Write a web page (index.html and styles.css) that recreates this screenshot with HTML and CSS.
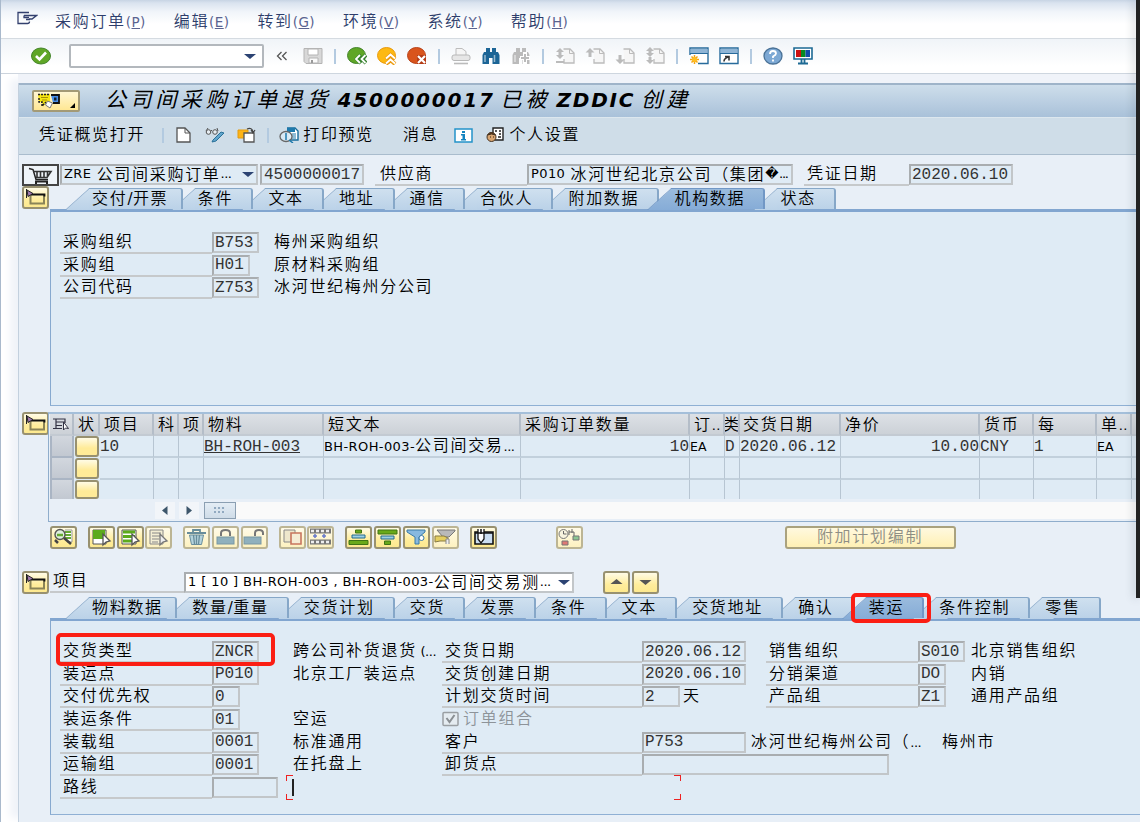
FILE: index.html
```html
<!DOCTYPE html>
<html lang="zh-CN">
<head>
    <meta charset="UTF-8">
    <title>公司间采购订单退货</title>
    <link rel="stylesheet" href="styles.css">
</head>
<body>
    <!-- shared icons -->
    <svg class="defs">
        <symbol id="folder" viewBox="0 0 27 22">
            <path d="M8.500 7v10.500H22V9" fill="none" stroke="#8a8458" stroke-width="2"/>
            <path d="M9 8.500h13.500v2" fill="none" stroke="#111" stroke-width="1.800"/>
            <path d="M4.500 3v9" stroke="#222"/>
            <path d="M5 4l6 3.500-5 3z" fill="#a07ab0" stroke="#222"/>
        </symbol>
        <symbol id="page" viewBox="0 0 20 18">
            <path d="M8.500 2h6.500l4 4v10H9v-4" fill="#f6f6f6" stroke="#bcbcbc" stroke-width="1.3"/>
            <path d="M14.500 2v4.500H19" fill="none" stroke="#bcbcbc"/>
        </symbol>
        <symbol id="binoculars" viewBox="0 0 20 18">
            <path d="M3 5h2V1h4v4h2V1h4v4h2l1.500 3v9h-7v-6H8v6H1.500V8z" fill="currentColor"/>
            <path d="M4 8v7M13.500 8v7" stroke="#fff" stroke-opacity=".55" stroke-width="1.500"/>
        </symbol>
        <symbol id="lock" viewBox="0 0 27 22">
            <rect x="5" y="11" width="17" height="7" fill="#8fb0bd" stroke="#7897a3"/>
        </symbol>
    </svg>

    <div class="menu-bar">
        <svg class="menu-icon" width="21" height="15" viewBox="0 0 21 15" fill="none" stroke="#33406e" stroke-width="1.300"><path d="M12 1.500H1v11h9.500q2 0 2-2M7 4.500h12.500L15 8h-3M7 4.500v2h5M9 8.500h4"/></svg>
        <span>采购订单<i>(<u>P</u>)</i></span>
        <span>编辑<i>(<u>E</u>)</i></span>
        <span>转到<i>(<u>G</u>)</i></span>
        <span>环境<i>(<u>V</u>)</i></span>
        <span>系统<i>(<u>Y</u>)</i></span>
        <span>帮助<i>(<u>H</u>)</i></span>
    </div>

    <div class="toolbar">
        <svg class="ico" viewBox="0 0 20 18"><ellipse cx="10" cy="9" rx="9.500" ry="8" fill="#5fa626" stroke="#44852c"/><path d="M5 9l3.500 3.500L15 5.500" fill="none" stroke="#fff" stroke-width="2.600"/></svg>
        <div class="command"><b class="arrow"></b></div>
        <svg class="chev" viewBox="0 0 12 10" fill="none" stroke="#555" stroke-width="1.300"><path d="M5.500 1L1.500 5l4 4M10.500 1l-4 4 4 4"/></svg>
        <svg class="ico" viewBox="0 0 20 18"><path d="M1 1.500h18v15H3l-2-2z" fill="#d8d8d8" stroke="#b4b4b4"/><path d="M5 2h10v6H5z" fill="#fff" stroke="#b4b4b4"/><path d="M6 11h9v5H6z" fill="#fafafa" stroke="#b4b4b4"/><path d="M8 13h2v3H8z" fill="#999"/></svg>
        <b class="sep"></b>
        <svg class="ico" viewBox="0 0 20 18"><ellipse cx="9.500" cy="8.500" rx="9" ry="8" fill="#5fa626" stroke="#44852c"/><path d="M14 8l-4 4 4 4M19 8l-4 4 4 4" fill="none" stroke="#35802c" stroke-width="4"/><path d="M13 8l-4 4 4 4M18.500 8l-4 4 4 4" fill="none" stroke="#fff" stroke-width="1.800"/></svg>
        <svg class="ico" viewBox="0 0 20 18"><ellipse cx="9.500" cy="8.500" rx="9" ry="8" fill="#fdb913" stroke="#e99a0c"/><path d="M9 12l4.500-4 4.500 4M9 17l4.500-4 4.500 4" fill="none" stroke="#ec9b10" stroke-width="4"/><path d="M9 11.500l4.500-4 4.500 4M9 16.500l4.500-4 4.500 4" fill="none" stroke="#fff" stroke-width="1.800"/></svg>
        <svg class="ico" viewBox="0 0 20 18"><ellipse cx="9.500" cy="8.500" rx="9" ry="8" fill="#d9541c" stroke="#b9431a"/><path d="M10 8h9v9h-9z" fill="#b43b15"/><path d="M11 9l7 7M18 9l-7 7" stroke="#fff" stroke-width="2.200"/></svg>
        <b class="sep"></b>
        <svg class="ico" viewBox="0 0 20 18"><path d="M5 8V1.500h6l4 3V8" fill="#f5f5f5" stroke="#bdbdbd"/><rect x="1" y="8" width="18" height="5.500" rx="2" fill="#e6e6e6" stroke="#b8b8b8"/><path d="M3 16.500h14" stroke="#bbb" stroke-width="1.600"/></svg>
        <svg class="ico blue"><use href="#binoculars"/></svg>
        <svg class="ico gray" viewBox="0 0 20 18"><use href="#binoculars" width="20" height="18"/><path d="M14 5v12M9 11h10" stroke="#fff" stroke-width="4"/><path d="M14 7v8M10 11h8" stroke="#bbb" stroke-width="2"/></svg>
        <b class="sep"></b>
        <svg class="ico" viewBox="0 0 20 18"><use href="#page" width="20" height="18"/><path d="M5 1l4 4H6.500v3H9l-4 4-4-4h2.500V5H1zM1 14h8v2H1z" fill="#bbb"/></svg>
        <svg class="ico" viewBox="0 0 20 18"><use href="#page" width="20" height="18"/><path d="M5 1l4.500 4.500h-3V10h-3V5.500H.5z" fill="#bbb"/></svg>
        <svg class="ico" viewBox="0 0 20 18"><use href="#page" width="20" height="18"/><path d="M5 17l4.500-4.500h-3V8h-3v4.500H.5z" fill="#bbb"/></svg>
        <svg class="ico" viewBox="0 0 20 18"><use href="#page" width="20" height="18"/><path d="M5 0l4 4H6.500v2H9l-4 4-4-4h2.500V4H1zM5 17l4-4H6.500v-3h-3v3H1z" fill="#bbb"/></svg>
        <b class="sep"></b>
        <svg class="ico" viewBox="0 0 20 18"><path d="M1 8V1h18v15.500H9" fill="#fff" stroke="#276b9c" stroke-width="1.400"/><path d="M1.500 2h17v4h-17z" fill="#8fb5d6"/><path d="M1 6.500h18" stroke="#276b9c"/><path d="M5.500 8v9M1 12.500h9M2.500 9.500l6 6M8.500 9.500l-6 6" stroke="#f5a511" stroke-width="1.500"/><circle cx="5.500" cy="12.500" r="2.500" fill="#ffbe22"/></svg>
        <svg class="ico" viewBox="0 0 20 18"><path d="M1 1h18v15.500H1z" fill="#fff" stroke="#276b9c" stroke-width="1.400"/><path d="M1.500 2h17v4h-17z" fill="#8fb5d6"/><path d="M1 6.500h18" stroke="#276b9c"/><path d="M5 14.500q0-3 4-4.500M6 9.500h4v4" fill="none" stroke="#333" stroke-width="1.600"/></svg>
        <b class="sep"></b>
        <svg class="ico" viewBox="0 0 20 18"><ellipse cx="10" cy="9" rx="9" ry="8" fill="#7ca8d4" stroke="#4a7297" stroke-width="1.300"/><path d="M7 7q0-3 3-3t3 2.500q0 1.500-3 3V11M10 12.500v2" fill="none" stroke="#fff" stroke-width="1.800"/></svg>
        <svg class="ico" viewBox="0 0 20 18"><path d="M1 1h18v11H1z" fill="#fff" stroke="#1d6a94" stroke-width="1.600"/><path d="M3 3h5v7H3z" fill="#c11"/><path d="M8 3h4.500v7H8z" fill="#088a22"/><path d="M12.500 3H17v7h-4.500z" fill="#124ba8"/><path d="M8.500 12v4M11.500 12v4M5 16.500h10" stroke="#1d6a94" stroke-width="1.800"/></svg>
    </div>

    <div class="window">
        <div class="title-bar">
            <div class="gos-button">
                <svg width="24" height="18" viewBox="0 0 24 18"><path d="M1 2h12v8H9l-3 5-1-5H2z" fill="#f6e612"/><path d="M1 2.500h12M2 6v4h3v4l4-4" fill="none" stroke="#222" stroke-width="1.500" stroke-dasharray="2 1"/><path d="M4 5.500h7M5 8h5" stroke="#a58f08"/><path d="M14 3h8v8h-6" fill="#4a8fe8" stroke="#111" stroke-width="1.800"/><path d="M17 5.500h2.500v3H17z" fill="#123"/><path d="M10.500 9l5 2-2.500 5-4.500-3z" fill="#fff" stroke="#777"/></svg>
                <svg class="corner" width="5" height="5" viewBox="0 0 5 5"><path d="M5 0v5H0z"/></svg>
            </div>
            <h1>公司间采购订单退货 <em>4500000017</em> 已被 <em>ZDDIC</em> 创建</h1>
        </div>

        <div class="app-toolbar">
            <span>凭证概览打开</span>
            <b class="sep"></b>
            <svg class="i-new" width="15" height="16" viewBox="0 0 15 16"><path d="M1 1h8l5 5v9H1z" fill="#fff" stroke="#555" stroke-width="1.300"/><path d="M9 1v5h5" fill="none" stroke="#555"/></svg>
            <svg class="i-edit" width="20" height="16" viewBox="0 0 20 16"><path d="M1 4l2-3M6 4l1-1M13 4l-1-3" stroke="#555"/><circle cx="3.500" cy="5" r="2.300" fill="#e7edf2" stroke="#555"/><circle cx="10" cy="5" r="2.300" fill="#e7edf2" stroke="#555"/><path d="M8 13l8-8 3 1-8 8-4 1z" fill="#62a6cd" stroke="#2a7199"/></svg>
            <svg class="i-copy" width="19" height="16" viewBox="0 0 19 16"><path d="M1 3h10v8H1z" fill="#fdb417" stroke="#e39a10"/><path d="M7 6h10v9H7z" fill="#fff" stroke="#555" stroke-width="1.300"/><path d="M10 2q5-2 6 3M14 3l2 3 2-3" fill="none" stroke="#444" stroke-width="1.200"/></svg>
            <b class="sep sep2"></b>
            <svg class="i-preview" width="20" height="16" viewBox="0 0 20 16"><path d="M8 1h8l3 3v9h-8" fill="#fff" stroke="#166c9c" stroke-width="1.400"/><path d="M8 1h8v4H8z" fill="#1e7aad"/><path d="M13 7h4M13 9h4M13 11h4" stroke="#1e7aad"/><ellipse cx="7" cy="9.500" rx="6" ry="5" fill="#d9ecf6" fill-opacity=".8" stroke="#666" stroke-width="1.300"/><path d="M7 6v7M10 13l4 3" stroke="#1e7aad" stroke-width="1.500"/></svg>
            <span>打印预览</span>
            <span class="msg">消息</span>
            <svg class="i-info" width="19" height="15" viewBox="0 0 19 15"><path d="M1 1h17v13H1z" fill="#fff" stroke="#2493c9" stroke-width="1.500"/><path d="M8 3h3v2H8zM7 6h4v5h1v1.500H7V11h1.500V7.500H7z" fill="#1384c0"/></svg>
            <svg class="i-user" width="18" height="16" viewBox="0 0 18 16"><path d="M7 1h10v12H7z" fill="#fff" stroke="#222" stroke-width="1.400"/><path d="M9 4h2M13 4h2M13 7h2M12 10h3" stroke="#222" stroke-width="1.500"/><circle cx="5.500" cy="10" r="4.500" fill="#d9a571" stroke="#432"/><path d="M1.500 8q4-5 8 0l-4-1z" fill="#643d1a" stroke="#432"/><path d="M4 10h1M7 10h1" stroke="#321"/></svg>
            <span>个人设置</span>
        </div>

        <div class="doc-header">
            <div class="cart"><svg width="32" height="18" viewBox="0 0 32 18"><path d="M5 2.500l4 1 3 10h12" fill="none" stroke="#222" stroke-width="1.500"/><path d="M9 5.500h18l-4 6H12M13 5v6M16.500 5v6M20 5v6M23.500 5v6" fill="none" stroke="#333" stroke-width="1.600"/><path d="M12 18v-2.500h11V18" fill="none" stroke="#222" stroke-width="2"/></svg></div>
            <div class="field text doc-type"><i>ZRE</i> 公司间采购订单<i class="dots">...</i><b class="arrow"></b></div>
            <div class="field mono doc-no">4500000017</div>
            <div class="label vendor-label">供应商</div>
            <div class="field text vendor"><i>P010</i> 冰河世纪北京公司（集团<i>�</i><i class="dots">...</i></div>
            <div class="label date-label">凭证日期</div>
            <div class="field mono date">2020.06.10</div>
        </div>

        <!-- header data -->
        <div class="section header-section">
            <div class="btn"><svg><use href="#folder"/></svg></div>
            <div class="section-body">
                <div class="tabs">
                    <div class="tab"><span>交付<i>/</i>开票</span></div>
                    <div class="tab"><span>条件</span></div>
                    <div class="tab"><span>文本</span></div>
                    <div class="tab"><span>地址</span></div>
                    <div class="tab"><span>通信</span></div>
                    <div class="tab"><span>合伙人</span></div>
                    <div class="tab"><span>附加数据</span></div>
                    <div class="tab active"><span>机构数据</span></div>
                    <div class="tab"><span>状态</span></div>
                </div>
                <div class="panel org-panel">
                    <div class="row"><div class="label">采购组织</div><div class="field mono w4">B753</div><p class="near">梅州采购组织</p></div>
                    <div class="row"><div class="label">采购组</div><div class="field mono w3">H01</div><p class="near">原材料采购组</p></div>
                    <div class="row"><div class="label">公司代码</div><div class="field mono w4">Z753</div><p class="near">冰河世纪梅州分公司</p></div>
                </div>
            </div>
        </div>

        <!-- item overview -->
        <div class="section overview-section">
            <div class="btn"><svg><use href="#folder"/></svg></div>
            <div class="items">
                <div class="items-row items-head">
                    <div class="cfg"><svg width="17" height="13" viewBox="0 0 17 13"><path d="M0 1h12v4M3 1v9.500h6M3 4h9M3 7.500h6M0 10.500h3" fill="none" stroke="#334" stroke-width="1.200"/><path d="M10.500 4v8l2-2 3 .5z" fill="#fff" stroke="#334"/></svg></div>
                    <div>状</div><div>项目</div><div>科</div><div>项</div><div>物料</div><div>短文本</div><div>采购订单数量</div><div>订<i>..</i></div><div class="cut"><span>类</span></div><div class="tight">交货日期</div><div>净价</div><div>货币</div><div>每</div><div>单<i>..</i></div><div></div>
                </div>
                <div class="items-row">
                    <div class="sel"></div><div class="st"></div><div class="mono">10</div><div></div><div></div><div class="mono"><u>BH-ROH-003</u></div><div><i>BH-ROH-003-</i>公司间交易<i class="dots">...</i></div><div class="mono right">10</div><div><i class="uom">EA</i></div><div class="mono">D</div><div class="mono">2020.06.12</div><div class="mono right">10.00</div><div class="mono">CNY</div><div class="mono">1</div><div><i class="uom">EA</i></div><div></div>
                </div>
                <div class="items-row">
                    <div class="sel"></div><div class="st"></div><div></div><div></div><div></div><div></div><div></div><div></div><div></div><div></div><div></div><div></div><div></div><div></div><div></div><div></div>
                </div>
                <div class="items-row last">
                    <div class="sel"></div><div class="st"></div><div></div><div></div><div></div><div></div><div></div><div></div><div></div><div></div><div></div><div></div><div></div><div></div><div></div><div></div>
                </div>
                <div class="scrollbar">
                    <div class="sb-btn"><svg width="6" height="9" viewBox="0 0 6 9"><path d="M5.500 0v9L0 4.500z" fill="#3d566b"/></svg></div>
                    <div class="sb-btn"><svg width="6" height="9" viewBox="0 0 6 9"><path d="M.5 0v9L6 4.500z" fill="#3d566b"/></svg></div>
                    <div class="sb-track"><div class="thumb"></div></div>
                </div>
            </div>
        </div>

        <div class="item-buttons">
            <div class="group">
                <div class="btn"><svg viewBox="0 0 27 22"><path d="M15 4h7v12h-5" fill="#fff" stroke="#999"/><path d="M15 6h6M15 9h6M15 12h6" stroke="#6a3" stroke-width="2"/><circle cx="10" cy="8.500" r="5" fill="#dff0dd" stroke="#555" stroke-width="1.400"/><path d="M7 9h6" stroke="#6a3" stroke-width="2.500"/><path d="M5 14l3 3M14 12l7 6" stroke="#444" stroke-width="2.500"/></svg></div>
            </div>
            <div class="group">
                <div class="btn"><svg viewBox="0 0 27 22"><path d="M5 4h13v14H5z" fill="#fff" stroke="#555"/><path d="M5 4h12v9H5z" fill="#5cab1c"/><path d="M15 8v11l3-3 4-1z" fill="#fff" stroke="#555" stroke-width="1.300"/></svg></div>
                <div class="btn"><svg viewBox="0 0 27 22"><path d="M5 4h14v14H5z" fill="#fff" stroke="#555"/><path d="M6 6h12M6 10.500h12M6 15h10" stroke="#5cab1c" stroke-width="3"/><path d="M15 8v11l3-3 4-1z" fill="#fff" stroke="#555" stroke-width="1.300"/></svg></div>
                <div class="btn off"><svg viewBox="0 0 27 22"><path d="M5 4h13v14H5z" fill="#f3eed4" stroke="#888"/><path d="M7 7h9M7 10h9M7 13h7M7 16h6" stroke="#888"/><path d="M15 8v11l3-3 4-1z" fill="#eee" stroke="#777" stroke-width="1.300"/></svg></div>
            </div>
            <div class="group">
                <div class="btn off"><svg viewBox="0 0 27 22"><path d="M4 7h19M10 6V4h7v2" stroke="#688d9b" stroke-width="1.800" fill="none"/><path d="M6.500 9h14l-2 9.500h-10z" fill="#b5d3dc" stroke="#688d9b"/><path d="M10.500 9l1 9M13.500 9v9M16.500 9l-1 9" stroke="#688d9b" stroke-width="1.300"/></svg></div>
                <div class="btn off"><svg viewBox="0 0 27 22"><use href="#lock" width="27" height="22"/><path d="M9 10V7q0-3 4.500-3T18 7v3" fill="none" stroke="#777" stroke-width="2"/></svg></div>
                <div class="btn off"><svg viewBox="0 0 27 22"><use href="#lock" x="-2" width="27" height="22"/><path d="M14 10V7q0-3 4-3t4 3v2" fill="none" stroke="#777" stroke-width="2"/></svg></div>
            </div>
            <div class="group">
                <div class="btn off"><svg viewBox="0 0 27 22"><path d="M5 4h11v12H5z" fill="#eee7cc" stroke="#888"/><path d="M12 7h10v11H12z" fill="#f5ecd5" stroke="#c8755e" stroke-width="1.600"/></svg></div>
                <div class="btn off"><svg viewBox="0 0 27 22"><path d="M3 5h21M3 16h21" stroke="#777" stroke-width="5"/><path d="M4 5h20M4 16h20" stroke="#eee" stroke-width="2.500" stroke-dasharray="3 2"/><path d="M6 10h4M8 8v4M15 10h4M17 8v4" stroke="#667acb" stroke-width="1.500"/></svg></div>
            </div>
            <div class="group">
                <div class="btn"><svg viewBox="0 0 27 22"><path d="M10.500 4h6v3h-6zM4 14.500h19v4H4z" fill="#69a91a" stroke="#3f7415"/><path d="M7 9h13v3H7z" fill="#9dd0e5" stroke="#236b8e"/></svg></div>
                <div class="btn"><svg viewBox="0 0 27 22"><path d="M4 4h19v4H4zM10.500 15h6v3.500h-6z" fill="#69a91a" stroke="#3f7415"/><path d="M7 10h13v3H7z" fill="#9dd0e5" stroke="#236b8e"/></svg></div>
                <div class="btn"><svg viewBox="0 0 27 22"><path d="M4 4h18v2l-6 5v7h-4v-7L4 6z" fill="#88b9df" stroke="#397aa7"/><circle cx="18.500" cy="12" r="2.500" fill="#fff" stroke="#397aa7"/></svg></div>
                <div class="btn off"><svg viewBox="0 0 27 22"><path d="M5 4h18v1l-6 6h-6z" fill="#b9b9b9" stroke="#777"/><path d="M3 10h9l4 2v3H8l-5 1z" fill="#e4ce5f" stroke="#887b45"/><path d="M14 18v-5h3v5" stroke="#888" fill="#eee"/></svg></div>
            </div>
            <div class="group">
                <div class="btn"><svg viewBox="0 0 27 22"><path d="M5 6h18v12H5z" fill="#cbdef2" stroke="#111" stroke-width="1.600"/><path d="M8 3v10l3 4 3-4V3" fill="#fff" stroke="#111" stroke-width="1.300"/><path d="M11 3v5M5 7h18" stroke="#111" stroke-width="1.500"/></svg></div>
            </div>
            <div class="group lone">
                <div class="btn off"><svg viewBox="0 0 27 22"><circle cx="7.500" cy="8" r="4.500" fill="#f8f4df" stroke="#777"/><path d="M7.500 5v3h3M13 4v5M16 3v4M13 6h5v5" fill="none" stroke="#666"/><path d="M17 10h6v4h-6z" fill="#8cc792" stroke="#777"/><path d="M6 15h6v4H6z" fill="#df7974" stroke="#777"/></svg></div>
            </div>
            <div class="btn wide">附加计划编制</div>
        </div>

        <!-- item detail -->
        <div class="item-picker">
            <div class="btn"><svg><use href="#folder"/></svg></div>
            <div class="label">项目</div>
            <div class="field text white"><i>1 [ 10 ] BH-ROH-003 , BH-ROH-003-</i>公司间交易测<i class="dots">...</i><b class="arrow"></b></div>
            <div class="btn step"><svg viewBox="0 0 27 22"><path d="M13.500 8l6 5h-12z" fill="#555"/></svg></div>
            <div class="btn"><svg viewBox="0 0 27 22"><path d="M13.500 14l6-5h-12z" fill="#555"/></svg></div>
        </div>
        <div class="detail-section">
            <div class="tabs">
                <div class="tab"><span>物料数据</span></div>
                <div class="tab"><span>数量<i>/</i>重量</span></div>
                <div class="tab"><span>交货计划</span></div>
                <div class="tab"><span>交货</span></div>
                <div class="tab"><span>发票</span></div>
                <div class="tab"><span>条件</span></div>
                <div class="tab"><span>文本</span></div>
                <div class="tab"><span>交货地址</span></div>
                <div class="tab"><span>确认</span></div>
                <div class="tab active"><span>装运</span><b class="mark mark-tab"></b></div>
                <div class="tab"><span>条件控制</span></div>
                <div class="tab"><span>零售</span></div>
            </div>
            <div class="panel ship-panel">
                <div class="col">
                    <div class="row"><div class="label">交货类型</div><div class="field mono w4">ZNCR</div><p>跨公司补货退货<i class="dots"> (...</i></p><b class="mark mark-type"></b></div>
                    <div class="row"><div class="label">装运点</div><div class="field mono w4">P010</div><p>北京工厂装运点</p></div>
                    <div class="row"><div class="label">交付优先权</div><div class="field mono w2">0</div></div>
                    <div class="row"><div class="label">装运条件</div><div class="field mono w2">01</div><p>空运</p></div>
                    <div class="row"><div class="label">装载组</div><div class="field mono w4">0001</div><p>标准通用</p></div>
                    <div class="row"><div class="label">运输组</div><div class="field mono w4">0001</div><p>在托盘上</p></div>
                    <div class="row"><div class="label">路线</div><div class="field mono w6"></div><div class="focus"><b></b></div></div>
                </div>
                <div class="col col-mid">
                    <div class="row"><div class="label">交货日期</div><div class="field mono w10">2020.06.12</div></div>
                    <div class="row"><div class="label">交货创建日期</div><div class="field mono w10">2020.06.10</div></div>
                    <div class="row"><div class="label">计划交货时间</div><div class="field mono w3">2</div><p class="unit">天</p></div>
                    <div class="row check"><svg width="17" height="16" viewBox="0 0 17 16"><rect x="1" y="1.500" width="15" height="13" rx="1" fill="#e5ecf1" stroke="#9a9fa3" stroke-width="1.500"/><path d="M4.500 7l3 4 5-7" fill="none" stroke="#8a8f93" stroke-width="2"/></svg><p>订单组合</p></div>
                    <div class="row"><div class="label">客户</div><div class="field mono w10">P753</div><p class="cust">冰河世纪梅州公司（<i class="dots">...</i></p><p class="city">梅州市</p></div>
                    <div class="row"><div class="label">卸货点</div><div class="field mono w24"></div></div>
                </div>
                <div class="col col-right">
                    <div class="row"><div class="label">销售组织</div><div class="field mono w4">S010</div><p>北京销售组织</p></div>
                    <div class="row"><div class="label">分销渠道</div><div class="field mono w2">DO</div><p>内销</p></div>
                    <div class="row"><div class="label">产品组</div><div class="field mono w2">Z1</div><p>通用产品组</p></div>
                </div>
            </div>
        </div>
    </div>
    <div class="screen-edge"></div>
</body>
</html>
```
FILE: styles.css
```css
* {
    box-sizing: border-box;
}

body {
    margin: 0;
    width: 1140px;
    height: 822px;
    overflow: hidden;
    position: relative;
    background-color: #fff;
    border-left: 1px solid #a9b9cc;
    font-family: "Noto Sans CJK SC", sans-serif;
    font-weight: 350;
    font-size: 16px;
    letter-spacing: 1.7px;
    line-height: 20px;
    color: #000;
    white-space: nowrap;
}

i {
    font-family: "DejaVu Sans", sans-serif;
    font-style: normal;
    font-weight: normal;
    font-size: 13px;
    letter-spacing: 0.4px;
}

p {
    margin: 0;
    flex: none;
    line-height: 17px;
}

svg {
    display: block;
    flex: none;
}

.defs {
    width: 0;
    height: 0;
    position: absolute;
}

.mono {
    font-family: "Liberation Mono", monospace;
    font-weight: normal;
    letter-spacing: 0;
    color: #333;
}

.dots {
    letter-spacing: -0.5px;
}

/* menu and standard toolbar */
.menu-bar {
    display: flex;
    align-items: center;
    gap: 28px;
    height: 39px;
    padding: 4px 0 0 16px;
    background: linear-gradient(#c7d4e4 0, #dae3ef 3px, #f1f5fa 12px, #fff 24px);
    border-bottom: 1px solid #d5dbe1;
    color: #2d3d6b;
}

.menu-bar i {
    font-size: 13.5px;
    color: #5a6390;
}

.menu-icon {
    margin: 0 -11px 6px 0;
}

.toolbar {
    display: flex;
    align-items: center;
    gap: 10px;
    height: 35px;
    padding-left: 30px;
    background: linear-gradient(#f0f4f8, #fff 80%);
    border-bottom: 1px solid #cbd3dc;
}

.ico {
    width: 20px;
    height: 18px;
}

.blue {
    color: #1c6596;
}

.gray {
    color: #bbb;
}

.command {
    width: 195px;
    height: 24px;
    margin: 0 2px 0 8px;
    border: 2px solid #b3b8bd;
    border-radius: 2px;
    background-color: #fff;
    display: flex;
    align-items: center;
    padding-right: 6px;
}

.arrow {
    margin-left: auto;
    border: 6px solid transparent;
    border-top: 5px solid #2c4373;
    border-bottom: 0;
}

.chev {
    width: 12px;
    height: 10px;
    margin-right: 5px;
}

.sep {
    width: 4px;
    height: 15px;
    border-left: 2px solid #b3cae0;
    border-right: 1px solid transparent;
    transform: translateX(1px);
}

/* transaction window */
.window {
    margin: 9px 0 0 17px;
    height: 739px;
    background-color: #e8eff7;
    border-left: 1px solid #c3d0de;
    box-shadow: -8px -4px 8px #f0f3f9, 0 -9px 0 #f0f3f9;
}

.title-bar {
    display: flex;
    align-items: center;
    height: 34px;
    padding-left: 13px;
    background: linear-gradient(#cedeeb, #a9c1d9);
    border-top: 2px solid #9fb4c9;
}

.gos-button {
    display: flex;
    align-items: center;
    width: 48px;
    height: 22px;
    padding-left: 3px;
    margin-top: -1px;
    border: 2px solid #a39a76;
    border-radius: 2px;
    background: linear-gradient(#fff6d2, #ffe793);
}

.corner {
    margin: 10px 0 0 9px;
}

h1 {
    margin: -4px 0 0 25px;
    font-size: 21px;
    font-weight: 400;
    font-style: italic;
    letter-spacing: 4.2px;
    color: #000;
    word-spacing: -3.2px;
}

h1 em {
    font-family: "DejaVu Sans", sans-serif;
    font-weight: bold;
    font-size: 20px;
    letter-spacing: 1.8px;
}

.app-toolbar {
    display: flex;
    align-items: center;
    height: 38px;
    padding: 0 0 2px 20px;
    background-color: #cfdde8;
    border-top: 1px solid #dde7ee;
    border-bottom: 1px solid #a9bccd;
}

.app-toolbar span {
    margin-top: -4px;
}

.app-toolbar .sep {
    margin: 0 11px 0 16px;
}

.app-toolbar .sep2 {
    margin: 0 9px 0 10px;
}

.i-edit {
    margin: 0 12px 0 14px;
}

.i-preview {
    margin-right: 4px;
}

.app-toolbar .msg {
    margin-left: 29px;
    margin-right: 16px;
}

.i-info {
    margin-right: 13px;
}

.i-user {
    margin-right: 5px;
}

/* fields */
.field {
    display: flex;
    align-items: center;
    flex: none;
    height: 21px;
    padding-left: 1px;
    border: 2px solid #a9adb0;
    border-right-color: #c2c6c9;
    border-bottom-color: #c2c6c9;
    background-color: #dfebf5;
    white-space: pre;
}

.field.text {
    padding: 0 0 4px 2px;
}

.field.text i {
    margin-top: 3px;
}

.field.text .arrow {
    margin-top: 3px;
    margin-right: 2px;
}

.label {
    flex: none;
    height: 22px;
    padding-left: 3px;
    border-bottom: 2px solid #c6c9cb;
    line-height: 17px;
}

.w2 { width: 28px; }
.w3 { width: 38px; }
.w4 { width: 47px; }
.w6 { width: 66px; }
.w10 { width: 104px; }
.w24 { width: 247px; }

.btn {
    flex: none;
    width: 27px;
    height: 23px;
    border: 2px solid #989170;
    border-radius: 3px;
    background: linear-gradient(#fffbe5, #ffed9c 60%, #fde98f);
}

.btn svg {
    width: 27px;
    height: 22px;
    margin: -2px;
}

.btn.off {
    border-color: #bcb594;
    background: linear-gradient(#fffbe8, #fdf1c0);
}

/* order header */
.doc-header {
    display: flex;
    height: 31px;
    padding: 9px 0 0 3px;
}

.cart {
    width: 37px;
    height: 22px;
    border: 2px solid #444;
    background-color: #eef3f8;
    margin-right: 1px;
}

.doc-type {
    width: 198px;
    margin-right: 2px;
}

.doc-no {
    width: 104px;
    padding-left: 2px;
}

.vendor-label {
    width: 152px;
    margin-left: 11px;
    padding-left: 5px;
}

.vendor {
    width: 266px;
}

.vendor .dots {
    letter-spacing: -1.2px;
}

.date-label {
    width: 105px;
    margin-left: 11px;
}

.date {
    width: 104px;
}

.section {
    display: flex;
    padding-left: 3px;
}

.section-body {
    flex: 1;
    margin-left: 1px;
    padding-top: 2px;
}

.header-section {
    height: 226px;
}

/* tabs */
.tabs {
    display: flex;
    height: 21px;
    padding-left: 27px;
}

.tab {
    position: relative;
    height: 21px;
    line-height: 17px;
}

/* slanted left edge, its foot sits under the tab before */
.tab::before {
    content: "";
    position: absolute;
    z-index: 0;
    left: -12px;
    top: 0;
    width: 34px;
    height: 21px;
    background: linear-gradient(#cfe0ef, #bbd2e8);
    border: 1px solid #86a7c8;
    border-width: 1px 0 0 1px;
    transform: skewX(-48deg);
    transform-origin: 0 100%;
}

.tab span {
    display: block;
    position: relative;
    z-index: 1;
    height: 21px;
    margin-left: 12px;
    padding: 0 18.2px 0 3px;
    background: linear-gradient(#cfe0ef, #bbd2e8);
    border-top: 1px solid #86a7c8;
    border-right: 2px solid #86a7c8;
    border-top-right-radius: 3px;
}

.tab i {
    font-size: 15px;
}

.tab:first-child span {
    padding-right: 12.500px;
}

.tab.active::before,
.tab.active span {
    z-index: 2;
    background: linear-gradient(#9abbdd, #86acd7);
    border-color: #7197c5;
}

.panel {
    border-left: 1px solid #86a9cf;
    border-top: 3px solid #82a6d0;
    border-bottom: 1px solid #8fb0d4;
    background-color: #dfebf5;
}

.org-panel {
    height: 197px;
    padding: 20px 0 0 9px;
}

.row {
    position: relative;
    display: flex;
    height: 22.7px;
}

.row .label {
    width: 152px;
}

.row .w2 + p {
    margin-left: 53px;
}

.row .w4 + p {
    margin-left: 34px;
}

.row .w4 + .near {
    margin-left: 15px;
}

.row .w3 + .near {
    margin-left: 24px;
}

/* item table */
.items {
    flex: 1;
    height: 110px;
    margin-left: -1px;
    padding-left: 1px;
    border-top: 2px solid #a4bfda;
    border-left: 1px solid #8fadcc;
    border-bottom: 1px solid #8fadcc;
}

.items-row {
    display: grid;
    grid-template-columns: 24px 26px 54px 25px 25px 120px 197px 169px 35px 15px 101px 139px 54px 63px 35px 8px;
    height: 22px;
    background-color: #dfebf5;
    line-height: 17px;
}

.items-row > div {
    height: 22px;
    border-right: 1px solid #b7c5d2;
    border-bottom: 2px solid #c2d0dc;
}

.items-row > .mono {
    line-height: 22px;
}

.items-row .uom {
    font-size: 12.5px;
    letter-spacing: 0;
}

.items-row.last,
.items-row.last > div {
    height: 19px;
}

.items-row.last > div {
    border-bottom: 0;
}

.items-head > div {
    padding-left: 4px;
    line-height: 18px;
    background: linear-gradient(#dde1e6, #ccd1d7);
    border-right: 2px solid #b4bdc8;
    border-bottom-color: #c3cad2;
}

.items-head .cfg {
    padding: 4px 0 0 3px;
}

.items-head .cut {
    padding-left: 0;
    overflow-x: clip;
}

.cut span {
    margin-left: -2px;
}

.items-head .tight {
    padding-left: 3px;
}

.items-row > .sel {
    background: linear-gradient(#d2d7de, #c2c8d1);
    border: 2px solid #aab5c4;
    border-top: 0;
}

.items-row > .st {
    height: 21px;
    margin: 0 1px;
    border: 2px solid #989170;
    border-radius: 3px;
    background: linear-gradient(#fffbe5, #ffeb98 60%);
}

.items-row.last > .st {
    border-bottom: 2px solid #989170;
}

.right {
    text-align: right;
}

.scrollbar {
    display: flex;
    gap: 4px;
    height: 17px;
    margin: 3px 0 0 105px;
}

.sb-btn {
    width: 20px;
    padding: 4px 0 0 7px;
    background-color: #f2f5f9;
}

.sb-track {
    flex: 1;
    margin-left: 1px;
    background-color: #fafafa;
}

.thumb {
    width: 32px;
    height: 17px;
    padding: 4px 0 0 9px;
    border: 1px solid #8b9fb2;
    background: linear-gradient(#e4edf5, #cfdce8);
}

.thumb::before {
    content: "";
    display: block;
    width: 11px;
    height: 6px;
    background: repeating-linear-gradient(90deg, transparent 0 2px, #d9e4ee 2px 4px), linear-gradient(#91a9c0 2px, transparent 2px 4px, #91a9c0 4px);
}

.item-buttons {
    display: flex;
    gap: 11px;
    padding: 4px 0 0 31px;
    height: 49px;
}

.group {
    display: flex;
    gap: 1.7px;
}

.lone {
    margin-left: 48px;
}

.wide {
    width: 171px;
    margin-left: 191px;
    border-color: #aaa27e;
    background: linear-gradient(#fff9df, #fff0b4);
    text-align: center;
    line-height: 15px;
    color: #8e8e84;
}

/* item detail */
.item-picker {
    display: flex;
    height: 26px;
    padding-left: 3px;
}

.item-picker .label {
    width: 134px;
    margin-left: 1px;
}

.white {
    width: 390px;
    margin-top: 1px;
    background-color: #fff;
}

.step {
    margin: 0 2px 0 29px;
}

.detail-section {
    margin-left: 31px;
}

.ship-panel {
    display: flex;
    height: 197px;
    padding: 20px 0 0 9px;
}

.col {
    width: 382px;
}

.col-mid {
    width: 324px;
}

.col-mid .label {
    width: 200px;
}

.row .unit {
    margin-left: 3px;
}

.row .cust {
    width: 186px;
    margin-left: 5px;
}

.row .city {
    margin-left: 5px;
}

.col-right .w2 + p {
    margin-left: 25px;
}

.col-right .w4 + p {
    margin-left: 6px;
}

.check {
    gap: 4px;
    color: #8d9399;
}

.check svg {
    margin-top: 2px;
}

/* input cursor frame */
.focus {
    position: relative;
    width: 395px;
    height: 25px;
    margin: -2px 0 0 8px;
    padding: 4px 0 0 6px;
    background:
        linear-gradient(#e22, #e22) 0 0 / 7px 1px,
        linear-gradient(#e22, #e22) 0 0 / 1px 6px,
        linear-gradient(#e22, #e22) 100% 0 / 7px 1px,
        linear-gradient(#e22, #e22) 100% 0 / 1px 6px,
        linear-gradient(#e22, #e22) 0 100% / 7px 1px,
        linear-gradient(#e22, #e22) 0 100% / 1px 6px,
        linear-gradient(#e22, #e22) 100% 100% / 7px 1px,
        linear-gradient(#e22, #e22) 100% 100% / 1px 6px;
    background-repeat: no-repeat;
    flex: none;
}

.focus b {
    display: block;
    width: 2px;
    height: 17px;
    background-color: #222;
}

/* red marker frames */
.mark {
    position: absolute;
    z-index: 4;
    border: 4px solid #fb1e14;
    border-radius: 5px;
}

.mark-tab {
    left: -3px;
    top: -4px;
    width: 80px;
    height: 30px;
}

.mark-type {
    left: -4px;
    top: -8px;
    width: 219px;
    height: 33px;
}

.screen-edge {
    position: absolute;
    top: 0;
    right: 0;
    width: 4px;
    height: 598px;
    background-color: #222;
    box-shadow: -2px 0 8px rgba(60, 70, 80, 0.25);
}
```
